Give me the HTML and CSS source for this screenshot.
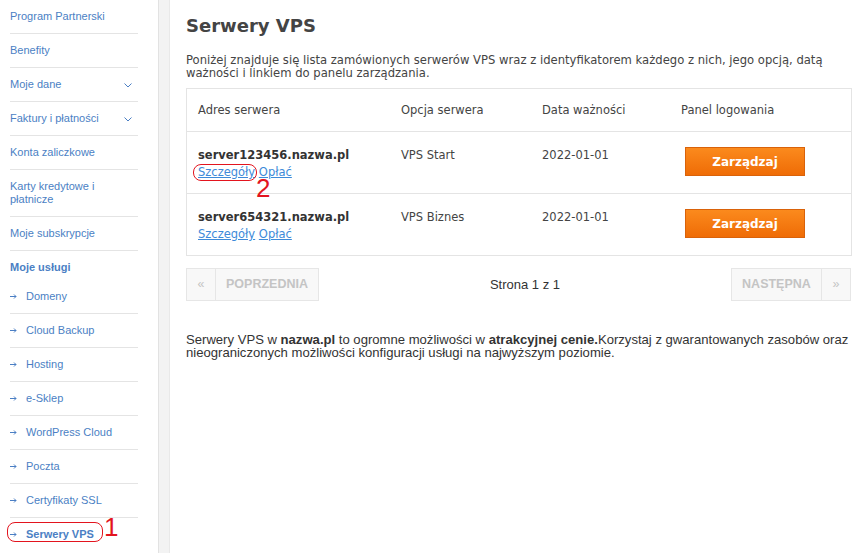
FILE: index.html
```html
<!DOCTYPE html>
<html>
<head>
<meta name="viewport" content="width=device-width, initial-scale=1">
<link rel="stylesheet" href="styles.css">
</head>
<body>

<div class="side">
  <ul class="menu">
    <li><a href="#">Program Partnerski</a></li>
    <li><a href="#">Benefity</a></li>
    <li class="drop"><a href="#">Moje dane</a>
      <svg class="chev" width="8" height="5" viewBox="0 0 8 5"><path d="M0.5 0.5L4 4L7.5 0.5" fill="none" stroke="#4b7fc4" stroke-width="1"/></svg>
    </li>
    <li class="drop"><a href="#">Faktury i płatności</a>
      <svg class="chev" width="8" height="5" viewBox="0 0 8 5"><path d="M0.5 0.5L4 4L7.5 0.5" fill="none" stroke="#4b7fc4" stroke-width="1"/></svg>
    </li>
    <li><a href="#">Konta zaliczkowe</a></li>
    <li><a href="#">Karty kredytowe i<br>płatnicze</a></li>
    <li><a href="#">Moje subskrypcje</a></li>
    <li class="head"><a href="#">Moje usługi</a></li>
    <li class="sub"><a href="#"><svg class="arr" width="7" height="5" viewBox="0 0 7 5"><path d="M0 2.5H6M4 0.5L6 2.5L4 4.5" fill="none" stroke="#4b7fc4" stroke-width="1"/></svg>Domeny</a></li>
    <li class="sub"><a href="#"><svg class="arr" width="7" height="5" viewBox="0 0 7 5"><path d="M0 2.5H6M4 0.5L6 2.5L4 4.5" fill="none" stroke="#4b7fc4" stroke-width="1"/></svg>Cloud Backup</a></li>
    <li class="sub"><a href="#"><svg class="arr" width="7" height="5" viewBox="0 0 7 5"><path d="M0 2.5H6M4 0.5L6 2.5L4 4.5" fill="none" stroke="#4b7fc4" stroke-width="1"/></svg>Hosting</a></li>
    <li class="sub"><a href="#"><svg class="arr" width="7" height="5" viewBox="0 0 7 5"><path d="M0 2.5H6M4 0.5L6 2.5L4 4.5" fill="none" stroke="#4b7fc4" stroke-width="1"/></svg>e-Sklep</a></li>
    <li class="sub"><a href="#"><svg class="arr" width="7" height="5" viewBox="0 0 7 5"><path d="M0 2.5H6M4 0.5L6 2.5L4 4.5" fill="none" stroke="#4b7fc4" stroke-width="1"/></svg>WordPress Cloud</a></li>
    <li class="sub"><a href="#"><svg class="arr" width="7" height="5" viewBox="0 0 7 5"><path d="M0 2.5H6M4 0.5L6 2.5L4 4.5" fill="none" stroke="#4b7fc4" stroke-width="1"/></svg>Poczta</a></li>
    <li class="sub"><a href="#"><svg class="arr" width="7" height="5" viewBox="0 0 7 5"><path d="M0 2.5H6M4 0.5L6 2.5L4 4.5" fill="none" stroke="#4b7fc4" stroke-width="1"/></svg>Certyfikaty SSL</a></li>
    <li class="sub active"><a href="#"><svg class="arr" width="7" height="5" viewBox="0 0 7 5"><path d="M0 2.5H6M4 0.5L6 2.5L4 4.5" fill="none" stroke="#4b7fc4" stroke-width="1"/></svg>Serwery VPS</a></li>
  </ul>
</div>
<div class="strip"></div>

<div class="main">
  <h1>Serwery VPS</h1>
  <p class="intro">Poniżej znajduje się lista zamówionych serwerów VPS wraz z identyfikatorem każdego z nich, jego opcją, datą ważności i linkiem do panelu zarządzania.</p>

  <table class="servers">
    <tr>
      <th class="c1">Adres serwera</th>
      <th class="c2">Opcja serwera</th>
      <th class="c3">Data ważności</th>
      <th class="c4">Panel logowania</th>
    </tr>
    <tr>
      <td><b class="host">server123456.nazwa.pl</b>
        <div class="links"><a href="#">Szczegóły</a> <a href="#">Opłać</a></div></td>
      <td>VPS Start</td>
      <td>2022-01-01</td>
      <td><button class="manage">Zarządzaj</button></td>
    </tr>
    <tr>
      <td><b class="host">server654321.nazwa.pl</b>
        <div class="links"><a href="#">Szczegóły</a> <a href="#">Opłać</a></div></td>
      <td>VPS Biznes</td>
      <td>2022-01-01</td>
      <td><button class="manage">Zarządzaj</button></td>
    </tr>
  </table>

  <div class="pager">
    <div class="pg"><span class="pbtn arrow">«</span><span class="pbtn prev">POPRZEDNIA</span></div>
    <div class="pinfo">Strona 1 z 1</div>
    <div class="pg"><span class="pbtn next">NASTĘPNA</span><span class="pbtn arrow">»</span></div>
  </div>

  <p class="outro">Serwery VPS w <b>nazwa.pl</b> to ogromne możliwości w <b>atrakcyjnej cenie.</b><span>Korzystaj z gwarantowanych zasobów oraz </span><span>nieograniczonych możliwości konfiguracji usługi na najwyższym poziomie.</span></p>
</div>

<!-- annotations drawn over the screenshot -->
<div class="mark mark1"></div>
<div class="num num1">1</div>
<div class="mark mark2"></div>
<div class="num num2">2</div>

</body>
</html>
```

FILE: styles.css
```css
body {
  margin: 0;
  display: flex;
  font-family: "DejaVu Sans", Verdana, sans-serif;
  color: #444;
  background: #fff;
  min-height: 553px;
}

.side {
  width: 158px;
  flex: none;
}

.menu {
  list-style: none;
  margin: 0 20px 0 10px;
  padding: 0;
  font-family: "Liberation Sans", Arial, sans-serif;
  font-size: 11px;
  line-height: 13px;
}

.menu li {
  padding: 10px 0 10px 0;
  border-bottom: 1px solid #e4e4e4;
  position: relative;
}

.menu a {
  color: #4b7fc4;
  text-decoration: none;
  display: flex;
  align-items: center;
}

.menu .chev {
  position: absolute;
  right: 6px;
  top: 15px;
}

.menu li.head {
  padding-bottom: 6px;
  border-bottom: none;
  font-weight: bold;
}

.menu li.sub a {
  gap: 9px;
}

.menu li.active {
  border-bottom: none;
  font-weight: bold;
}

.strip {
  width: 10px;
  flex: none;
  background: #f3f3f3;
  border-left: 1px solid #e2e2e2;
  border-right: 1px solid #e9e9e9;
}

.main {
  flex: 1;
  padding: 0 4px 0 16px;
}

h1 {
  font-size: 18px;
  line-height: 24px;
  margin: 14px 0 0;
  color: #444;
}

.intro {
  font-size: 11.6px;
  line-height: 13px;
  margin: 16px 0 8px;
  color: #444;
}

.servers {
  width: 100%;
  border-collapse: collapse;
  border: 1px solid #e4e4e4;
  font-size: 11.5px;
  color: #444;
}

.servers th {
  font-weight: normal;
  text-align: left;
  height: 42px;
  padding: 0 0 0 11px;
  border-bottom: 1px solid #e4e4e4;
}

.servers .c1 { width: 192px; }
.servers .c2 { width: 130px; }
.servers .c3 { width: 128px; }

.servers td {
  vertical-align: top;
  padding: 16px 0 0 11px;
  height: 45px;
  border-bottom: 1px solid #e4e4e4;
}

.host {
  color: #333;
  display: block;
  line-height: 14px;
}

.links {
  margin-top: 3px;
  line-height: 14px;
}

.links a {
  color: #3d8ad9;
}

.manage {
  margin: -1px 0 0 4px;
  width: 120px;
  height: 29px;
  border: 1px solid #d9620a;
  background: linear-gradient(#fb8a1d, #ef6c06);
  color: #fff;
  font-family: "DejaVu Sans", Verdana, sans-serif;
  font-weight: bold;
  font-size: 12px;
  cursor: pointer;
}

.pager {
  display: flex;
  justify-content: space-between;
  align-items: center;
  margin-top: 12px;
  padding-right: 1px;
}

.pg {
  display: flex;
}

.pbtn {
  height: 31px;
  line-height: 31px;
  border: 1px solid #e6e6e6;
  background: #f8f8f8;
  color: #c4c4c4;
  font-family: "Liberation Sans", Arial, sans-serif;
  font-weight: bold;
  font-size: 12.5px;
  text-align: center;
}

.pbtn.arrow {
  width: 28px;
  font-weight: normal;
}

.pbtn.prev {
  width: 102px;
  border-left: none;
}

.pbtn.next {
  width: 89px;
  border-right: none;
}

.pinfo {
  font-family: "Liberation Sans", Arial, sans-serif;
  font-size: 13px;
  color: #333;
}

.outro {
  font-family: "Liberation Sans", Arial, sans-serif;
  font-size: 13.1px;
  line-height: 13px;
  color: #333;
  margin: 32px 0 0;
}

.mark {
  position: absolute;
  border: 1.5px solid #e3141e;
  border-radius: 8px;
}

.mark1 {
  left: 7px;
  top: 522px;
  width: 94px;
  height: 18px;
}

.mark2 {
  left: 193px;
  top: 164px;
  width: 62px;
  height: 15px;
}

.num {
  position: absolute;
  color: #e3141e;
  font-family: "Liberation Sans", Arial, sans-serif;
  font-size: 26px;
  line-height: 26px;
}

.num1 {
  left: 104px;
  top: 514px;
}

.num2 {
  left: 256px;
  top: 175px;
}
```
